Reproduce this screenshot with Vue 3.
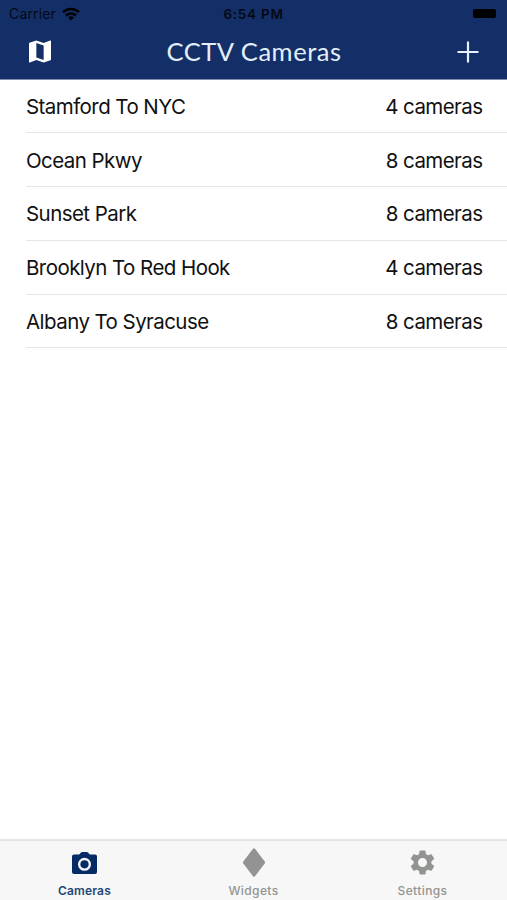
<script setup>
const routes = [
  { name: 'Stamford To NYC', count: 4 },
  { name: 'Ocean Pkwy', count: 8 },
  { name: 'Sunset Park', count: 8 },
  { name: 'Brooklyn To Red Hook', count: 4 },
  { name: 'Albany To Syracuse', count: 8 },
]
</script>

<template>
  <div class="screen">
    <header class="header">
      <div class="status">
        <div class="carrier">
          <span>Carrier</span>
          <svg class="wifi" viewBox="0 0 18 14">
            <g fill="none" stroke="#000" stroke-width="2.5">
              <path d="M1 5.2a11.5 11.5 0 0 1 16 0" />
              <path d="M4 8.5a7.3 7.3 0 0 1 10 0" />
            </g>
            <path d="M9 13.6 6 10.6a4.3 4.3 0 0 1 6 0z" />
          </svg>
        </div>
        <span class="time">6:54 PM</span>
        <span class="battery"></span>
      </div>
      <div class="navbar">
        <svg class="map" viewBox="3 3 18 18" fill="#fff">
          <path d="M20.5 3l-.16.03L15 5.1 9 3 3.36 4.9c-.21.07-.36.25-.36.48V20.5c0 .28.22.5.5.5l.16-.03L9 18.9l6 2.1 5.64-1.9c.21-.07.36-.25.36-.48V3.5c0-.28-.22-.5-.5-.5zM15 19l-6-2.11V5l6 2.11V19z" />
        </svg>
        <h1 class="title">CCTV Cameras</h1>
        <svg class="plus" viewBox="0 0 22 22">
          <path d="M11 0.5v21M0.5 11h21" stroke="#e6f0ff" stroke-width="2.2" />
        </svg>
      </div>
    </header>

    <main class="list">
      <div v-for="r in routes" :key="r.name" class="row">
        <span>{{ r.name }}</span>
        <span>{{ r.count }} cameras</span>
      </div>
    </main>

    <nav class="tabs">
      <div class="tab active">
        <div class="icon">
          <svg width="25" height="22" viewBox="0 0 25 22">
            <path fill="currentColor" fill-rule="evenodd" d="M2 2.5h5.2l1.6-1.8Q9.4 0 10.3 0h4.4q.9 0 1.5.7l1.6 1.8H23a2 2 0 0 1 2 2V20a2 2 0 0 1-2 2H2a2 2 0 0 1-2-2V4.5a2 2 0 0 1 2-2zM12.5 5.8a6.5 6.5 0 1 0 0 13 6.5 6.5 0 1 0 0-13z" />
            <circle cx="12.5" cy="12.3" r="4.1" fill="currentColor" />
          </svg>
        </div>
        <span class="label">Cameras</span>
      </div>
      <div class="tab">
        <div class="icon">
          <svg width="22" height="29" viewBox="0 0 22 29" fill="currentColor">
            <path d="M10 .8Q11 -.3 12 .8L21.7 13.5Q22.3 14.5 21.7 15.5L12 28.2Q11 29.3 10 28.2L.3 15.5Q-.3 14.5 .3 13.5z" />
          </svg>
        </div>
        <span class="label">Widgets</span>
      </div>
      <div class="tab">
        <div class="icon">
          <svg width="25" height="25" viewBox="2 2 20 20" fill="currentColor">
            <path d="M19.14 12.94c.04-.3.06-.61.06-.94 0-.32-.02-.64-.07-.94l2.03-1.58c.18-.14.23-.41.12-.61l-1.92-3.32c-.12-.22-.37-.29-.59-.22l-2.39.96c-.5-.38-1.03-.7-1.62-.94l-.36-2.54c-.04-.24-.24-.41-.48-.41h-3.84c-.24 0-.43.17-.47.41l-.36 2.54c-.59.24-1.13.57-1.62.94l-2.39-.96c-.22-.08-.47 0-.59.22L2.74 8.87c-.12.21-.08.47.12.61l2.03 1.58c-.05.3-.09.63-.09.94s.02.64.07.94l-2.03 1.58c-.18.14-.23.41-.12.61l1.92 3.32c.12.22.37.29.59.22l2.39-.96c.5.38 1.03.7 1.62.94l.36 2.54c.05.24.24.41.48.41h3.84c.24 0 .44-.17.47-.41l.36-2.54c.59-.24 1.13-.56 1.62-.94l2.39.96c.22.08.47 0 .59-.22l1.92-3.32c.12-.22.07-.47-.12-.61l-2.01-1.58zM12 15.6c-1.98 0-3.6-1.62-3.6-3.6s1.62-3.6 3.6-3.6 3.6 1.62 3.6 3.6-1.62 3.6-3.6 3.6z" />
          </svg>
        </div>
        <span class="label">Settings</span>
      </div>
    </nav>
  </div>
</template>

<style>
body {
  background: #fff;
}
</style>

<style scoped>
.screen {
  display: flex;
  flex-direction: column;
  width: 507px;
  height: 900px;
  overflow: hidden;
  background: #fff;
  font-family: Inter, "Liberation Sans", sans-serif;
}
svg {
  display: block;
  flex: none;
}
.header {
  box-sizing: border-box;
  height: 79.5px;
  flex: none;
  background: #142f68;
  border-bottom: 1px solid #7d8bad;
}
.status {
  display: grid;
  grid-template-columns: 1fr auto 1fr;
  align-items: center;
  height: 27px;
  padding: 0 11px 0 9px;
  color: #030914;
}
.carrier {
  display: flex;
  align-items: center;
  gap: 6px;
  font-size: 14px;
  letter-spacing: 0.15px;
}
.wifi {
  width: 18px;
  height: 14px;
}
.time {
  padding-left: 2px;
  font-size: 13.5px;
  font-weight: 600;
  letter-spacing: 0.75px;
}
.battery {
  justify-self: end;
  width: 23px;
  height: 9px;
  border-radius: 2px;
  background: #000;
}
.navbar {
  display: grid;
  grid-template-columns: 1fr auto 1fr;
  align-items: center;
  height: 49px;
  padding: 0 28px 0 29px;
}
.map {
  width: 22px;
  height: 23px;
}
.title {
  margin: 0;
  padding-bottom: 2px;
  color: #e2effb;
  font-family: Lato, sans-serif;
  font-size: 25.5px;
  font-weight: 400;
  line-height: 32px;
  letter-spacing: 0.55px;
  white-space: nowrap;
}
.plus {
  justify-self: end;
  width: 22px;
  height: 22px;
}
.list {
  flex: 1;
  padding-left: 26px;
}
.row {
  box-sizing: border-box;
  display: flex;
  justify-content: space-between;
  align-items: center;
  height: 53.75px;
  padding: 2px 24.5px 0 0;
  border-bottom: 1px solid #e6e6e7;
  color: #111;
  font-size: 20.5px;
  line-height: 28px;
  letter-spacing: -0.56px;
  white-space: nowrap;
}
.tabs {
  box-sizing: border-box;
  display: grid;
  grid-template-columns: repeat(3, 1fr);
  height: 61px;
  flex: none;
  border-top: 2px solid #e5e5e6;
  background: #f7f7f7;
}
.tab {
  display: flex;
  flex-direction: column;
  align-items: center;
  color: #929492;
}
.active {
  color: #052b67;
}
.icon {
  display: flex;
  align-items: center;
  height: 43px;
}
.label {
  font-size: 12px;
  font-weight: 500;
  line-height: 14px;
  letter-spacing: 0.4px;
}
.active .label {
  color: #234778;
  font-weight: 600;
  letter-spacing: 0.15px;
}
</style>
